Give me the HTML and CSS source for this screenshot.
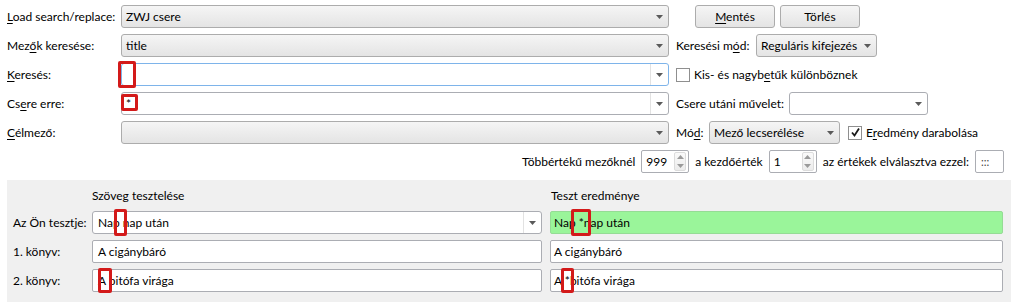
FILE: index.html
```html
<!DOCTYPE html>
<html lang="hu">
<head>
  <meta charset="UTF-8" />
  <title>Keresés és csere</title>
  <link rel="stylesheet" href="styles.css">
</head>
<body>
  <div class="dialog">
    <div class="row">
      <span class="lbl"><u>L</u>oad search/replace:</span>
      <div class="combo ro wide">
        <span class="val">ZWJ csere</span>
        <span class="drop"><svg width="7" height="4" viewBox="0 0 7 4"><path d="M0 0h7L3.5 4z" fill="#5a5a5a"/></svg></span>
      </div>
      <div class="btns">
        <button class="btn"><u>M</u>entés</button>
        <button class="btn">Törlés</button>
      </div>
    </div>

    <div class="row">
      <span class="lbl">Mez<u>ő</u>k keresése:</span>
      <div class="combo ro wide">
        <span class="val">title</span>
        <span class="drop"><svg width="7" height="4" viewBox="0 0 7 4"><path d="M0 0h7L3.5 4z" fill="#5a5a5a"/></svg></span>
      </div>
      <div class="side">
        <span class="side-lbl w-mode">Keresési m<u>ó</u>d:</span>
        <div class="combo ro mode">
          <span class="val">Reguláris kifejezés</span>
          <span class="drop"><svg width="7" height="4" viewBox="0 0 7 4"><path d="M0 0h7L3.5 4z" fill="#5a5a5a"/></svg></span>
        </div>
      </div>
    </div>

    <div class="row">
      <span class="lbl"><u>K</u>eresés:</span>
      <div class="combo ed focus wide">
        <span class="val"></span>
        <span class="drop"><svg width="7" height="4" viewBox="0 0 7 4"><path d="M0 0h7L3.5 4z" fill="#5a5a5a"/></svg></span>
        <span class="mark m-search"></span>
      </div>
      <div class="side">
        <span class="check"></span>
        <span>Kis- és nagyb<u>e</u>tűk különböznek</span>
      </div>
    </div>

    <div class="row">
      <span class="lbl">Cs<u>e</u>re erre:</span>
      <div class="combo ed wide">
        <span class="val">*</span>
        <span class="drop"><svg width="7" height="4" viewBox="0 0 7 4"><path d="M0 0h7L3.5 4z" fill="#5a5a5a"/></svg></span>
        <span class="mark m-replace"></span>
      </div>
      <div class="side">
        <span class="side-lbl w-after">Csere utáni művelet:</span>
        <div class="combo ed after">
          <span class="val"></span>
          <span class="drop flat"><svg width="7" height="4" viewBox="0 0 7 4"><path d="M0 0h7L3.5 4z" fill="#5a5a5a"/></svg></span>
        </div>
      </div>
    </div>

    <div class="row">
      <span class="lbl"><u>C</u>élmező:</span>
      <div class="combo ro wide">
        <span class="val"></span>
        <span class="drop"><svg width="7" height="4" viewBox="0 0 7 4"><path d="M0 0h7L3.5 4z" fill="#5a5a5a"/></svg></span>
      </div>
      <div class="side">
        <span class="side-lbl w-mod">Mó<u>d</u>:</span>
        <div class="combo ro mod">
          <span class="val">Mező lecserélése</span>
          <span class="drop"><svg width="7" height="4" viewBox="0 0 7 4"><path d="M0 0h7L3.5 4z" fill="#5a5a5a"/></svg></span>
        </div>
        <span class="check checked"><svg width="11" height="11" viewBox="0 0 11 11"><path d="M2 5.5l2.5 3L9 1.5" fill="none" stroke="#1a1a1a" stroke-width="1.8"/></svg></span>
        <span>E<u>r</u>edmény darabolása</span>
      </div>
    </div>

    <div class="row multi">
      <span>Többértékű mezőknél</span>
      <div class="spin">
        <span class="val">999</span>
        <span class="spin-btns">
          <span><svg width="7" height="4" viewBox="0 0 7 4"><path d="M0 4h7L3.5 0z" fill="#9a9a9a"/></svg></span>
          <span><svg width="7" height="4" viewBox="0 0 7 4"><path d="M0 0h7L3.5 4z" fill="#9a9a9a"/></svg></span>
        </span>
      </div>
      <span>a kezdőérték</span>
      <div class="spin">
        <span class="val">1</span>
        <span class="spin-btns">
          <span><svg width="7" height="4" viewBox="0 0 7 4"><path d="M0 4h7L3.5 0z" fill="#9a9a9a"/></svg></span>
          <span><svg width="7" height="4" viewBox="0 0 7 4"><path d="M0 0h7L3.5 4z" fill="#9a9a9a"/></svg></span>
        </span>
      </div>
      <span>az értékek elválasztva ezzel:</span>
      <div class="field sep">:::</div>
    </div>

    <div class="panel">
      <div class="test-grid">
        <span></span>
        <span class="head">Szöveg tesztelése</span>
        <span class="head">Teszt eredménye</span>

        <span class="t-lbl">Az Ön tesztje:</span>
        <div class="combo ed">
          <span class="val">Nap nap után</span>
          <span class="drop"><svg width="7" height="4" viewBox="0 0 7 4"><path d="M0 0h7L3.5 4z" fill="#5a5a5a"/></svg></span>
          <span class="mark m-test"></span>
        </div>
        <div class="field result">
          Nap *nap után
          <span class="mark m-result"></span>
        </div>

        <span class="t-lbl">1. könyv:</span>
        <div class="field">A cigánybáró</div>
        <div class="field out">A cigánybáró</div>

        <span class="t-lbl">2. könyv:</span>
        <div class="field">A bitófa virága<span class="mark m-book"></span></div>
        <div class="field out">A *bitófa virága<span class="mark m-book-out"></span></div>
      </div>
    </div>
  </div>
</body>
</html>
```

FILE: styles.css
```css
* {
  box-sizing: border-box;
}
body {
  margin: 0;
  background: #fff;
  color: #000;
  font-family: Lato, "Noto Sans", sans-serif;
  font-size: 12px;
  overflow: hidden;
}

u {
  text-decoration-thickness: 1px;
  text-underline-offset: 2px;
}

.dialog {
  padding-top: 5px;
}

.row {
  display: flex;
  align-items: center;
  height: 23px;
  margin-bottom: 6px;
  padding-left: 7px;
  white-space: nowrap;
}

.lbl {
  width: 114px;
}

/* combo boxes */
.combo {
  position: relative;
  display: flex;
  align-items: center;
  height: 23px;
  border: 1px solid #acacac;
  border-radius: 3px;
  padding-left: 4px;
}
.combo.ro {
  background: linear-gradient(#f5f5f5, #e4e4e4);
}
.combo.ed {
  background: #fff;
  border-color: #abadb3;
}
.combo.focus {
  border-color: #7eb4ea;
}
.combo .val {
  flex: 1;
}
.drop {
  width: 18px;
  align-self: stretch;
  display: flex;
  align-items: center;
  justify-content: center;
}
.combo.ed .drop {
  border-left: 1px solid #e2e2e2;
}
.combo.ed .drop.flat {
  border-left: none;
}
.wide {
  width: 548px;
}

.btns {
  display: flex;
  gap: 5px;
  margin-left: 26px;
}
.btn {
  width: 80px;
  height: 23px;
  border: 1px solid #acacac;
  border-radius: 3px;
  background: linear-gradient(#f5f5f5, #e4e4e4);
  font: inherit;
  color: #000;
  padding: 0;
}

.side {
  display: flex;
  align-items: center;
  margin-left: 7px;
}
.side-lbl {
  display: inline-block;
}
.w-mode { width: 80px; }
.w-after { width: 113px; }
.w-mod { width: 33px; }
.mode { width: 121px; }
.after { width: 139px; }
.mod { width: 131px; }

.check {
  display: inline-flex;
  align-items: center;
  justify-content: center;
  width: 14px;
  height: 14px;
  border: 1px solid #8f8f8f;
  background: #fff;
  margin-right: 4px;
}
.check.checked {
  margin-left: 8px;
}

/* multi value row */
.multi {
  justify-content: flex-end;
  padding-right: 14px;
  gap: 6px;
}
.spin {
  display: flex;
  align-items: center;
  width: 48px;
  height: 23px;
  border: 1px solid #abadb3;
  border-radius: 2px;
  background: #fff;
  padding-left: 4px;
}
.spin .val {
  flex: 1;
}
.spin-btns {
  width: 12px;
  height: 19px;
  margin-right: 2px;
  display: flex;
  flex-direction: column;
  border: 1px solid #dcdcdc;
  border-radius: 2px;
  background: linear-gradient(#fafafa, #ececec);
}
.spin-btns span {
  flex: 1;
  display: flex;
  align-items: center;
  justify-content: center;
}
.field {
  position: relative;
  display: flex;
  align-items: center;
  height: 23px;
  border: 1px solid #abadb3;
  border-radius: 2px;
  background: #fff;
  padding-left: 5px;
}
.sep {
  width: 29px;
  font-size: 11px;
  color: #444;
}

/* test panel */
.panel {
  margin: 7px 7px 0;
  background: #f0f0f0;
  padding: 8px 8px 14px 6px;
}
.test-grid {
  display: grid;
  grid-template-columns: 71px 450px 453px;
  grid-template-rows: 17px repeat(3, 23px);
  column-gap: 8px;
  row-gap: 6px;
  align-items: center;
  white-space: nowrap;
}
.test-grid .head {
  align-self: start;
}
.test-grid .head + .head {
  padding-left: 1px;
}
.test-grid .combo .val {
  padding-left: 1px;
}
.field.out {
  padding-left: 3px;
}
.field.result {
  background: #9af59a;
  border-color: #95dc95;
  padding-left: 3px;
}

/* red annotation boxes */
.mark {
  position: absolute;
  border: 3px solid #d31a1a;
  border-radius: 2px;
  pointer-events: none;
}
.m-search { left: -4px; top: -3px; width: 18px; height: 27px; }
.m-replace { left: -1px; top: 1px; width: 17px; height: 17px; }
.m-test { left: 21px; top: -3px; width: 13px; height: 27px; }
.m-result { left: 20px; top: -3px; width: 20px; height: 27px; }
.m-book { left: 5px; top: -2px; width: 14px; height: 25px; }
.m-book-out { left: 10px; top: -2px; width: 13px; height: 25px; }
```
